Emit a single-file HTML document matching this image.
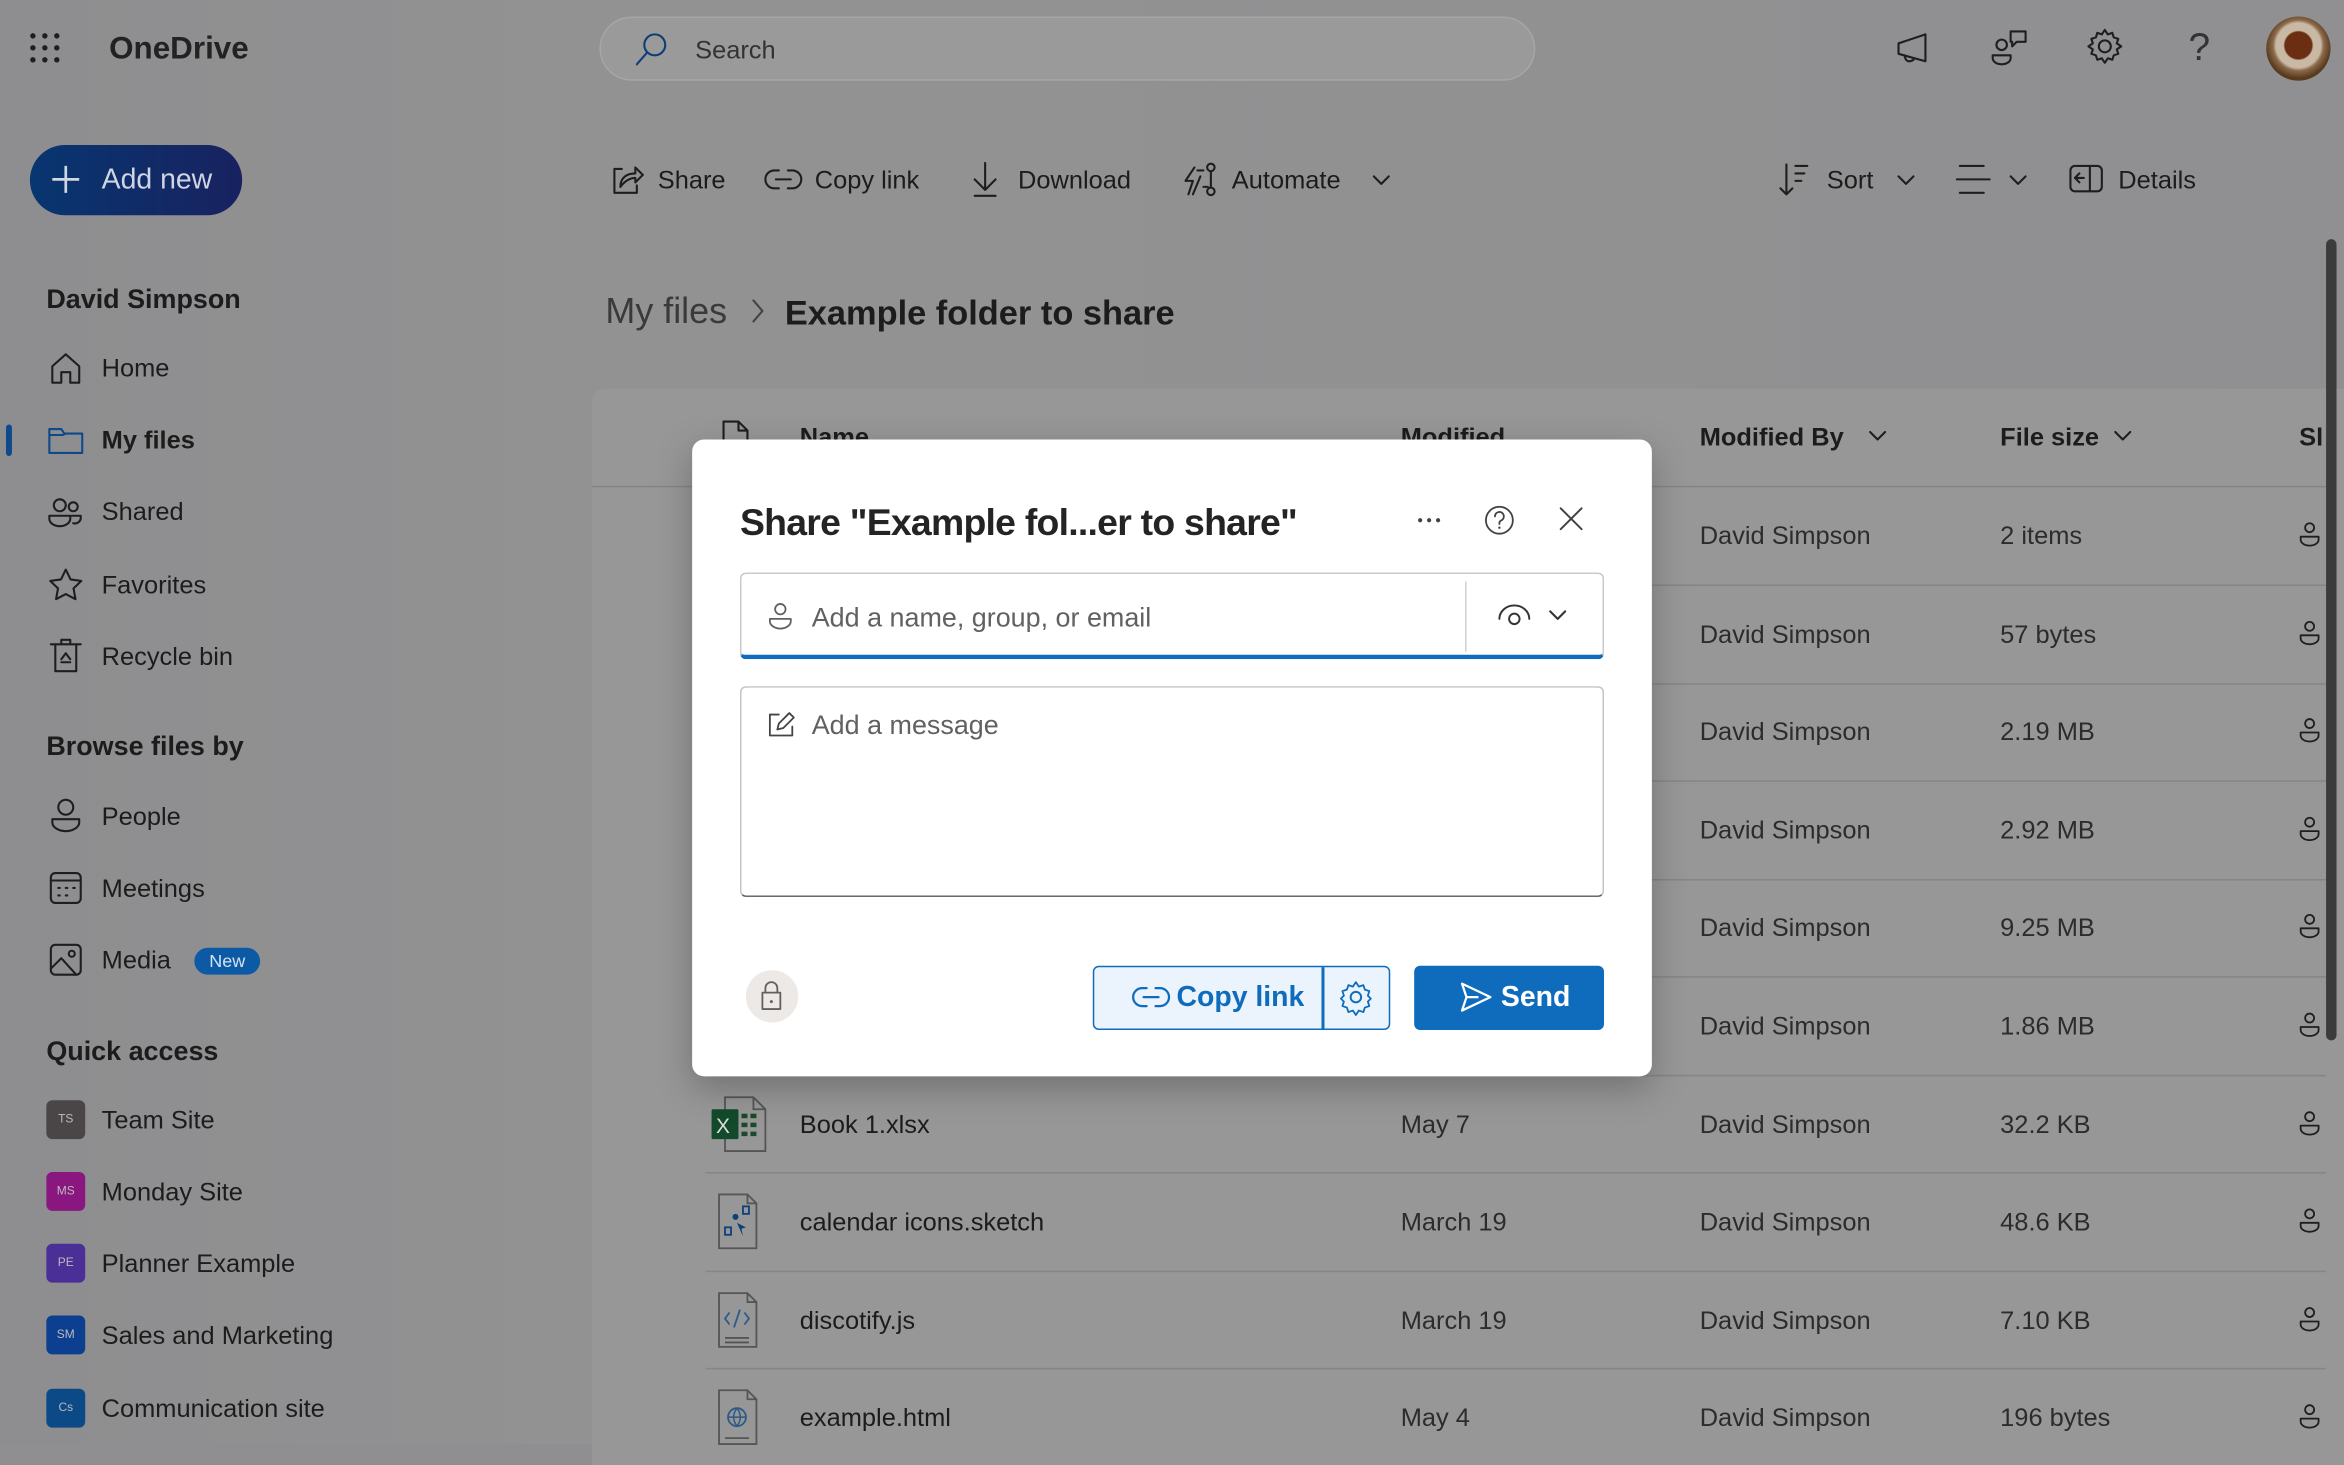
<!DOCTYPE html>
<html><head><meta charset="utf-8"><style>
*{box-sizing:border-box;margin:0;padding:0}
html,body{width:2344px;height:1444px;overflow:hidden;background:#8f8f91}
#w{position:absolute;left:0;top:0;width:1568px;height:966px;transform:scale(1.49490);transform-origin:0 0;font-family:"Liberation Sans",sans-serif;color:#1c1c1c;background:linear-gradient(90deg,#8e8e90 0,#929293 400px,#909092 100%)}
.a{position:absolute;white-space:nowrap}
.t{font-size:17px;line-height:20px;margin-top:1px}
svg{position:absolute;overflow:visible}
.i{fill:none;stroke:#1e1e1e;stroke-width:1.4;stroke-linecap:round;stroke-linejoin:round}
.row{position:absolute;left:472px;width:1084px;height:1px;background:#858585}
.sq{position:absolute;left:31px;width:26px;height:26px;border-radius:4px;color:#bbb;font-size:8px;text-align:center;line-height:26px}
</style></head><body><div id="w">
<svg width="24" height="24" style="left:19px;top:21px"><g fill="#1e1e1e"><circle cx="3" cy="3" r="1.8"/><circle cx="11" cy="3" r="1.8"/><circle cx="19" cy="3" r="1.8"/><circle cx="3" cy="11" r="1.8"/><circle cx="11" cy="11" r="1.8"/><circle cx="19" cy="11" r="1.8"/><circle cx="3" cy="19" r="1.8"/><circle cx="11" cy="19" r="1.8"/><circle cx="19" cy="19" r="1.8"/></g></svg>
<div class="a" style="left:73px;top:21px;font-size:21px;font-weight:600;color:#222">OneDrive</div>
<div class="a" style="left:401px;top:11px;width:626px;height:43px;border-radius:22px;background:#9a9a9b;border:1px solid #a6a6a6"></div>
<svg width="24" height="24" style="left:424px;top:21px"><circle cx="14" cy="9" r="7" class="i" style="stroke:#0c3e75"/><path d="M9 14L2 22" class="i" style="stroke:#0c3e75"/></svg>
<div class="a t" style="left:465px;top:23px;color:#333">Search</div>
<svg width="26" height="24" style="left:1268px;top:20px"><path d="M2 9L20 3V21L2 16Z M6 17 Q7 23 12 20" class="i"/></svg>
<svg width="26" height="26" style="left:1332px;top:19px"><circle cx="7" cy="11" r="3.5" class="i"/><path d="M1 18h12v2a6 4 0 0 1-12 0z M13 2h10v7h-6l-3 3V9h-1z" class="i"/></svg>
<svg width="26" height="26" style="left:1396px;top:19px"><circle cx="12" cy="12" r="4" class="i"/><path d="M12 1l2 3 3-1 1 3 3 1-1 3 3 2-3 2 1 3-3 1-1 3-3-1-2 3-2-3-3 1-1-3-3-1 1-3-3-2 3-2-1-3 3-1 1-3 3 1z" class="i"/></svg>
<div class="a" style="left:1464px;top:16px;font-size:26px;color:#333">?</div>
<div class="a" style="left:1516px;top:11px;width:43px;height:43px;border-radius:50%;background:radial-gradient(circle at 50% 45%,#6b2e12 0 9px,#c9b8a4 10px 15px,#8a6a4a 17px,#5a3a1e 22px)"></div>
<div class="a" style="left:20px;top:97px;width:142px;height:47px;border-radius:24px;background:linear-gradient(90deg,#083670,#182260)"></div>
<svg width="20" height="20" style="left:34px;top:110px"><path d="M10 1V19M1 10H19" stroke="#d0d6e4" stroke-width="1.8"/></svg>
<div class="a" style="left:68px;top:110px;font-size:19px;color:#cfd5e3">Add new</div>
<svg width="22" height="22" style="left:408px;top:109px"><path d="M8 4H3v16h15v-5 M7 16c0-6 4-9 10-9V3l5 5-5 5V10c-4 0-7 2-10 6z" class="i"/></svg>
<div class="a t" style="left:440px;top:110px">Share</div>
<svg width="24" height="16" style="left:512px;top:112px"><path d="M9 2H6a6 6 0 0 0 0 12h3 M15 2h3a6 6 0 0 1 0 12h-3 M7 8h10" class="i"/></svg>
<div class="a t" style="left:545px;top:110px">Copy link</div>
<svg width="20" height="24" style="left:649px;top:108px"><path d="M10 1V18M3 12l7 7 7-7M3 23h14" class="i"/></svg>
<div class="a t" style="left:681px;top:110px">Download</div>
<svg width="24" height="24" style="left:791px;top:108px"><path d="M8 4L2 13h5l-3 9 M10 6h4 M14 17h3 M12 10l-5 12" class="i"/><circle cx="19" cy="4" r="2.5" class="i"/><circle cx="19" cy="20" r="2.5" class="i"/><path d="M19 7v10" class="i"/></svg>
<div class="a t" style="left:824px;top:110px">Automate</div>
<svg width="12" height="8" style="left:918px;top:117px"><path d="M1 1l5 5 5-5" class="i"/></svg>
<svg width="22" height="24" style="left:1190px;top:108px"><path d="M5 2V22M1 18l4 4 4-4M11 3h8M11 8h6M11 13h4" class="i"/></svg>
<div class="a t" style="left:1222px;top:110px">Sort</div>
<svg width="12" height="8" style="left:1269px;top:117px"><path d="M1 1l5 5 5-5" class="i"/></svg>
<svg width="24" height="22" style="left:1308px;top:109px"><path d="M3 2h16M1 11h22M3 20h16" class="i"/></svg>
<svg width="12" height="8" style="left:1344px;top:117px"><path d="M1 1l5 5 5-5" class="i"/></svg>
<svg width="24" height="20" style="left:1384px;top:110px"><rect x="1" y="1" width="21" height="17" rx="3" class="i"/><path d="M14 1v17M10 9H4m3-3-3 3 3 3" class="i"/></svg>
<div class="a t" style="left:1417px;top:110px">Details</div>
<div class="a" style="left:31px;top:190px;font-size:18px;font-weight:600">David Simpson</div>
<div class="a" style="left:4px;top:284px;width:4px;height:21px;border-radius:2px;background:#0e4a8a"></div>
<svg width="22" height="22" style="left:33px;top:235px"><path d="M2 10L11 2l9 8v11h-6v-7H8v7H2z" class="i"/></svg>
<div class="a t" style="left:68px;top:236px">Home</div>
<svg width="24" height="20" style="left:32px;top:284px"><path d="M1 3h8l2 3h12v13H1z M1 7h9l2-1" class="i" style="stroke:#0e4a8a"/></svg>
<div class="a t" style="left:68px;top:284px;font-weight:600">My files</div>
<svg width="24" height="22" style="left:32px;top:332px"><circle cx="8" cy="6" r="4" class="i"/><circle cx="17" cy="7" r="3" class="i"/><path d="M1 13h14v2a7 5 0 0 1-14 0z M16 13h6v2a4 4 0 0 1-5 3" class="i"/></svg>
<div class="a t" style="left:68px;top:332px">Shared</div>
<svg width="24" height="22" style="left:32px;top:380px"><path d="M12 1l3.2 6.6 7.2 1-5.2 5 1.3 7.2L12 17.4 5.5 20.8 6.8 13.6 1.6 8.6l7.2-1z" class="i"/></svg>
<div class="a t" style="left:68px;top:381px">Favorites</div>
<svg width="22" height="24" style="left:33px;top:427px"><path d="M1 4h20M4 4v18h14V4M8 4V1h6v3 M8 14l3-4 3 4 M8 16h6" class="i"/></svg>
<div class="a t" style="left:68px;top:429px">Recycle bin</div>
<div class="a" style="left:31px;top:489px;font-size:18px;font-weight:600">Browse files by</div>
<svg width="22" height="24" style="left:33px;top:534px"><circle cx="11" cy="6" r="5" class="i"/><path d="M2 14h18v2a9 6 0 0 1-18 0z" class="i"/></svg>
<div class="a t" style="left:68px;top:536px">People</div>
<svg width="22" height="22" style="left:33px;top:583px"><rect x="1" y="1" width="20" height="20" rx="3" class="i"/><path d="M1 6h20M6 11h1M11 11h1M16 11h1M6 16h1M11 16h1" class="i"/></svg>
<div class="a t" style="left:68px;top:584px">Meetings</div>
<svg width="22" height="22" style="left:33px;top:631px"><rect x="1" y="1" width="20" height="20" rx="3" class="i"/><circle cx="15" cy="7" r="2" class="i"/><path d="M1 17l7-7 10 11" class="i"/></svg>
<div class="a t" style="left:68px;top:632px">Media</div>
<div class="a" style="left:130px;top:634px;width:44px;height:18px;border-radius:9px;background:#0c5aa6;color:#d6e2f0;font-size:12px;text-align:center;line-height:18px">New</div>
<div class="a" style="left:31px;top:693px;font-size:18px;font-weight:600">Quick access</div>
<div class="sq" style="top:736px;background:#4a4647">TS</div><div class="a t" style="left:68px;top:739px">Team Site</div>
<div class="sq" style="top:784px;background:#8a1780">MS</div><div class="a t" style="left:68px;top:787px">Monday Site</div>
<div class="sq" style="top:832px;background:#4a2f96">PE</div><div class="a t" style="left:68px;top:835px">Planner Example</div>
<div class="sq" style="top:880px;background:#0c3f8f">SM</div><div class="a t" style="left:68px;top:883px">Sales and Marketing</div>
<div class="sq" style="top:929px;background:#0b4a86">Cs</div><div class="a t" style="left:68px;top:932px">Communication site</div>
<div class="a" style="left:405px;top:195px;font-size:24px;color:#3a3a3a">My files</div>
<svg width="10" height="16" style="left:502px;top:200px"><path d="M2 1l6 7-6 7" class="i" style="stroke:#444"/></svg>
<div class="a" style="left:525px;top:196px;font-size:23px;font-weight:600;color:#1c1c1c">Example folder to share</div>
<div class="a" style="left:396px;top:260px;width:1172px;height:720px;border-radius:8px 0 0 0;background:#979797"></div>
<svg width="18" height="22" style="left:483px;top:281px"><path d="M1 1h10l6 6v14H1z M11 1v6h6" class="i"/></svg>
<div class="a t" style="left:535px;top:282px;font-weight:600">Name</div>
<div class="a t" style="left:937px;top:282px;font-weight:600">Modified</div>
<div class="a t" style="left:1137px;top:282px;font-weight:600">Modified By</div>
<svg width="12" height="8" style="left:1250px;top:288px"><path d="M1 1l5 5 5-5" class="i"/></svg>
<div class="a t" style="left:1338px;top:282px;font-weight:600">File size</div>
<svg width="12" height="8" style="left:1414px;top:288px"><path d="M1 1l5 5 5-5" class="i"/></svg>
<div class="a t" style="left:1538px;top:282px;font-weight:600">Sl</div>
<div class="row" style="left:396px;width:1160px;top:325px"></div>
<div class="row" style="top:391px"></div><div class="row" style="top:457px"></div><div class="row" style="top:522px"></div><div class="row" style="top:588px"></div><div class="row" style="top:653px"></div><div class="row" style="top:719px"></div><div class="row" style="top:784px"></div><div class="row" style="top:850px"></div><div class="row" style="top:915px"></div>
<div class="a t" style="left:1137px;top:348px;color:#2c2c2c">David Simpson</div><div class="a t" style="left:1338px;top:348px;color:#2c2c2c">2 items</div>
<div class="a t" style="left:1137px;top:414px;color:#2c2c2c">David Simpson</div><div class="a t" style="left:1338px;top:414px;color:#2c2c2c">57 bytes</div>
<div class="a t" style="left:1137px;top:479px;color:#2c2c2c">David Simpson</div><div class="a t" style="left:1338px;top:479px;color:#2c2c2c">2.19 MB</div>
<div class="a t" style="left:1137px;top:545px;color:#2c2c2c">David Simpson</div><div class="a t" style="left:1338px;top:545px;color:#2c2c2c">2.92 MB</div>
<div class="a t" style="left:1137px;top:610px;color:#2c2c2c">David Simpson</div><div class="a t" style="left:1338px;top:610px;color:#2c2c2c">9.25 MB</div>
<div class="a t" style="left:1137px;top:676px;color:#2c2c2c">David Simpson</div><div class="a t" style="left:1338px;top:676px;color:#2c2c2c">1.86 MB</div>
<div class="a t" style="left:535px;top:742px">Book 1.xlsx</div><div class="a t" style="left:937px;top:742px;color:#2c2c2c">May 7</div><div class="a t" style="left:1137px;top:742px;color:#2c2c2c">David Simpson</div><div class="a t" style="left:1338px;top:742px;color:#2c2c2c">32.2 KB</div>
<div class="a t" style="left:535px;top:807px">calendar icons.sketch</div><div class="a t" style="left:937px;top:807px;color:#2c2c2c">March 19</div><div class="a t" style="left:1137px;top:807px;color:#2c2c2c">David Simpson</div><div class="a t" style="left:1338px;top:807px;color:#2c2c2c">48.6 KB</div>
<div class="a t" style="left:535px;top:873px">discotify.js</div><div class="a t" style="left:937px;top:873px;color:#2c2c2c">March 19</div><div class="a t" style="left:1137px;top:873px;color:#2c2c2c">David Simpson</div><div class="a t" style="left:1338px;top:873px;color:#2c2c2c">7.10 KB</div>
<div class="a t" style="left:535px;top:938px">example.html</div><div class="a t" style="left:937px;top:938px;color:#2c2c2c">May 4</div><div class="a t" style="left:1137px;top:938px;color:#2c2c2c">David Simpson</div><div class="a t" style="left:1338px;top:938px;color:#2c2c2c">196 bytes</div>
<svg width="14" height="300" style="left:1538px;top:349px"><g class="i" style="stroke-width:1.2"><circle cx="7" cy="4" r="3"/><path d="M1 10h12v2a6 4 0 0 1-12 0z"/><circle cx="7" cy="70" r="3"/><path d="M1 76h12v2a6 4 0 0 1-12 0z"/><circle cx="7" cy="135" r="3"/><path d="M1 141h12v2a6 4 0 0 1-12 0z"/><circle cx="7" cy="201" r="3"/><path d="M1 207h12v2a6 4 0 0 1-12 0z"/><circle cx="7" cy="266" r="3"/><path d="M1 272h12v2a6 4 0 0 1-12 0z"/></g></svg>
<svg width="14" height="300" style="left:1538px;top:677px"><g class="i" style="stroke-width:1.2"><circle cx="7" cy="4" r="3"/><path d="M1 10h12v2a6 4 0 0 1-12 0z"/><circle cx="7" cy="70" r="3"/><path d="M1 76h12v2a6 4 0 0 1-12 0z"/><circle cx="7" cy="135" r="3"/><path d="M1 141h12v2a6 4 0 0 1-12 0z"/><circle cx="7" cy="201" r="3"/><path d="M1 207h12v2a6 4 0 0 1-12 0z"/><circle cx="7" cy="266" r="3"/><path d="M1 272h12v2a6 4 0 0 1-12 0z"/></g></svg>
<svg width="40" height="40" style="left:475px;top:732px"><path d="M10 2h19l8 8v28H10z M29 2v8h8" fill="none" stroke="#555" stroke-width="1.2"/><rect x="1" y="10" width="18" height="20" rx="1" fill="#124a2b"/><text x="4" y="26" fill="#ddd" font-size="14" font-family="Liberation Sans">X</text><g fill="#1a4a2a"><rect x="21" y="13" width="4" height="3"/><rect x="27" y="13" width="4" height="3"/><rect x="21" y="19" width="4" height="3"/><rect x="27" y="19" width="4" height="3"/><rect x="21" y="25" width="4" height="3"/><rect x="27" y="25" width="4" height="3"/></g></svg>
<svg width="40" height="40" style="left:475px;top:797px"><path d="M6 2h19l6 6v30H6z M25 2v6h6" fill="none" stroke="#555" stroke-width="1.2"/><circle cx="17" cy="17" r="2" fill="#0d3f7a"/><rect x="22" y="10" width="4" height="5" fill="none" stroke="#0d3f7a" stroke-width="1.2"/><rect x="10" y="24" width="4" height="5" fill="none" stroke="#0d3f7a" stroke-width="1.2"/><path d="M18 21l6 3-3 1 1 5z" fill="#0d3f7a"/></svg>
<svg width="40" height="40" style="left:475px;top:863px"><path d="M6 2h19l6 6v30H6z M25 2v6h6 M10 32h16M10 35h16" fill="none" stroke="#555" stroke-width="1.2"/><path d="M13 15l-3 4 3 4M23 15l3 4-3 4M20 13l-4 12" fill="none" stroke="#2c5a8a" stroke-width="1.2"/></svg>
<svg width="40" height="40" style="left:475px;top:928px"><path d="M6 2h19l6 6v30H6z M25 2v6h6 M10 34h16" fill="none" stroke="#555" stroke-width="1.2"/><circle cx="18" cy="20" r="6" fill="none" stroke="#2c5a8a" stroke-width="1.2"/><path d="M12 20h12M18 14c-3 4-3 8 0 12c3-4 3-8 0-12" fill="none" stroke="#2c5a8a" stroke-width="1"/></svg>
<div class="a" style="left:1556px;top:160px;width:7px;height:536px;border-radius:4px;background:#3b3b3b"></div>
<div class="a" style="left:463px;top:294px;width:642px;height:426px;border-radius:8px;background:#fff;box-shadow:0 8px 24px rgba(0,0,0,.25)"></div>
<div class="a" style="left:495px;top:336px;font-size:25px;font-weight:600;color:#242424;letter-spacing:-0.5px">Share "Example fol...er to share"</div>
<svg width="18" height="4" style="left:948px;top:346px"><g fill="#424242"><circle cx="2" cy="2" r="1.4"/><circle cx="8" cy="2" r="1.4"/><circle cx="14" cy="2" r="1.4"/></g></svg>
<svg width="22" height="22" style="left:992px;top:337px"><circle cx="11" cy="11" r="9" class="i" style="stroke:#424242;stroke-width:1.2"/><path d="M8 8.5a3 3 0 1 1 4 2.8c-1 .5-1 1-1 2.2" class="i" style="stroke:#424242;stroke-width:1.2"/><circle cx="11" cy="16" r=".8" fill="#424242"/></svg>
<svg width="16" height="16" style="left:1043px;top:339px"><path d="M1 1l14 14M15 1L1 15" class="i" style="stroke:#424242;stroke-width:1.3"/></svg>
<div class="a" style="left:495px;top:383px;width:578px;height:58px;border:1px solid #c9c9c9;border-bottom:3px solid #0f6cbd;border-radius:4px"></div>
<div class="a" style="left:980px;top:389px;width:1px;height:47px;background:#d1d1d1"></div>
<svg width="16" height="20" style="left:514px;top:403px"><circle cx="8" cy="4.5" r="3.5" class="i" style="stroke:#616161;stroke-width:1.2"/><path d="M1 11h14v1.5a7 5 0 0 1-14 0z" class="i" style="stroke:#616161;stroke-width:1.2"/></svg>
<div class="a" style="left:543px;top:403px;font-size:18px;color:#616161">Add a name, group, or email</div>
<svg width="24" height="16" style="left:1001px;top:404px"><path d="M2 10a10 9 0 0 1 20 0" class="i" style="stroke:#333;stroke-width:1.3"/><circle cx="12" cy="10" r="3.5" class="i" style="stroke:#333;stroke-width:1.3"/></svg>
<svg width="12" height="8" style="left:1036px;top:408px"><path d="M1 1l5 5 5-5" class="i" style="stroke:#333"/></svg>
<div class="a" style="left:495px;top:459px;width:578px;height:141px;border:1px solid #c4c4c4;border-bottom:1.5px solid #616161;border-radius:4px"></div>
<svg width="20" height="18" style="left:513px;top:476px"><path d="M8 2H2v14h15v-6 M7 12l1-4 7-7 3 3-7 7z" class="i" style="stroke:#444;stroke-width:1.2"/></svg>
<div class="a" style="left:543px;top:475px;font-size:18px;color:#616161">Add a message</div>
<div class="a" style="left:499px;top:649px;width:35px;height:35px;border-radius:50%;background:#ece9e6"></div>
<svg width="16" height="22" style="left:508px;top:655px"><path d="M4 9V6a4 4 0 0 1 8 0v3 M2 9h12v11H2z" class="i" style="stroke:#616161;stroke-width:1.2"/><circle cx="8" cy="15" r="1" fill="#616161"/></svg>
<div class="a" style="left:731px;top:646px;width:199px;height:43px;border:1.5px solid #0f6cbd;border-radius:4px;background:#ebf3fc"></div>
<div class="a" style="left:884px;top:647px;width:1.5px;height:41px;background:#0f6cbd"></div>
<svg width="24" height="14" style="left:758px;top:660px"><path d="M9 1H6a6 6 0 0 0 0 12h3 M15 1h3a6 6 0 0 1 0 12h-3 M7 7h10" class="i" style="stroke:#0f6cbd;stroke-width:1.5"/></svg>
<div class="a" style="left:787px;top:657px;font-size:19px;color:#0f6cbd;font-weight:600">Copy link</div>
<svg width="22" height="22" style="left:896px;top:656px"><circle cx="11" cy="11" r="3.5" class="i" style="stroke:#0f6cbd;stroke-width:1.3"/><path d="M11 1l2 3 3-1 1 3 3 1-1 3 2 2-2 2 1 3-3 1-1 3-3-1-2 3-2-3-3 1-1-3-3-1 1-3-2-2 2-2-1-3 3-1 1-3 3 1z" class="i" style="stroke:#0f6cbd;stroke-width:1.2"/></svg>
<div class="a" style="left:946px;top:646px;width:127px;height:43px;border-radius:4px;background:#0f6cbd"></div>
<svg width="22" height="22" style="left:976px;top:656px"><path d="M2 2l19 9-19 9 3-9zM5 11h8" fill="none" stroke="#fff" stroke-width="1.5" stroke-linejoin="round"/></svg>
<div class="a" style="left:1004px;top:657px;font-size:19px;color:#fff;font-weight:600">Send</div>
</div></body></html>
